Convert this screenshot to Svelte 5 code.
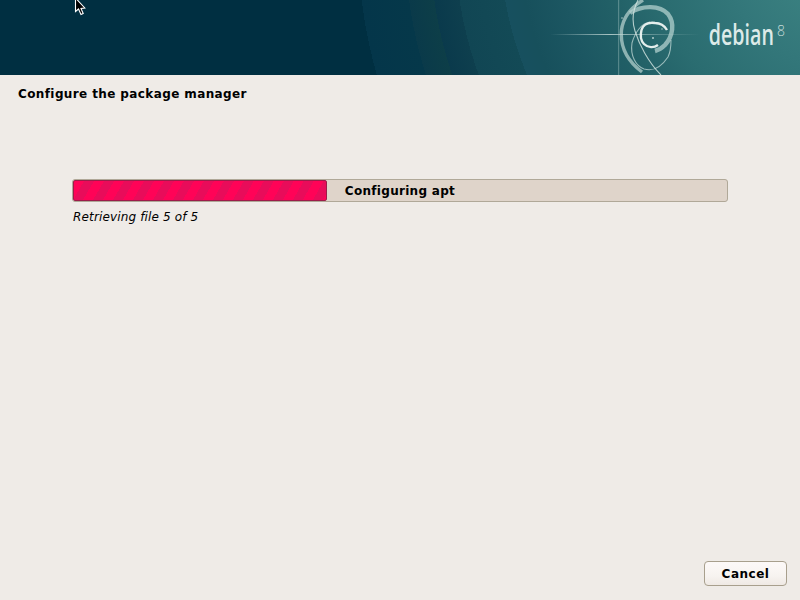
<script lang="ts">
  let progress = 38.9;
  let stage = "Configuring apt";
  let detail = "Retrieving file 5 of 5";
</script>

<div class="installer">
  <header class="banner">
    <svg class="swirl" viewBox="0 0 260 75" width="260" height="75" aria-hidden="true">
      <defs>
        <linearGradient id="hline" x1="0" x2="1" y1="0" y2="0">
          <stop offset="0" stop-color="#cfe3e0" stop-opacity="0" />
          <stop offset="0.4" stop-color="#d5e6e3" stop-opacity="0.75" />
          <stop offset="0.75" stop-color="#cfe3e0" stop-opacity="0.25" />
          <stop offset="1" stop-color="#cfe3e0" stop-opacity="0" />
        </linearGradient>
      </defs>
      <rect x="10" y="34" width="150" height="1" fill="url(#hline)" />
      <rect x="78" y="0" width="1.2" height="75" fill="#b9d4d2" opacity="0.35" />
      <!-- outer swirl, thick part -->
      <path d="M103 0 C 92 7 83 17 81.5 30 C 80 46 86 60 102 72" fill="none" stroke="#bcd6d3" stroke-width="3.4" opacity="0.7" />
      <path d="M90 13 C 102 5 120 5 128 14 C 135 23 133 36 125 45 C 122 48 119 50 115 51" fill="none" stroke="#b2d0cd" stroke-width="4.4" opacity="0.75" />
      <!-- thin strokes -->
      <path d="M98 0 C 92 12 92 22 95 31 C 99 44 108 62 121 75" fill="none" stroke="#d8e8e5" stroke-width="1.1" opacity="0.8" />
      <path d="M110 22 C 102 23 95 32 92 43 C 90 56 96 66 104 69 C 114 72 122 66 128 57 C 131 51 131 45 131 40" fill="none" stroke="#cbe0dd" stroke-width="1.1" opacity="0.7" />
      <!-- inner curl -->
      <path d="M127 30 C 124 25 119 23 115 23 C 108 22 103 25 101.5 30 C 100 36 101 41 104 44 C 108 48 114 48 118 45" fill="none" stroke="#eef5f3" stroke-width="2.4" opacity="0.95" />
      <circle cx="113" cy="38" r="1" fill="#d5e6e3" opacity="0.8" />
      <circle cx="122" cy="29" r="0.8" fill="#d5e6e3" opacity="0.7" />
      <circle cx="82" cy="18" r="0.8" fill="#d5e6e3" opacity="0.8" />
    </svg>
    <div class="brand"><span class="word">debian</span><span class="ver">8</span></div>
  </header>

  <main class="content">
    <h1>Configure the package manager</h1>

    <section class="progress-box">
      <div class="trough">
        <div class="fill" style="width: {progress}%"></div>
        <span class="stage">{stage}</span>
      </div>
      <p class="detail">{detail}</p>
    </section>
  </main>

  <footer class="actions">
    <button class="btn">Cancel</button>
  </footer>

  <svg class="cursor" width="13" height="17" viewBox="0 0 13 17" aria-hidden="true">
    <path d="M1.5 -2 L1.5 11.5 L4.5 9 L7 14.5 L9.2 13.5 L7 8.5 L10.8 8 Z" fill="#000" stroke="#fff" stroke-width="1.1" />
  </svg>
</div>

<style>
  :global(body) {
    margin: 0;
    background: #efebe7;
  }

  .installer {
    position: relative;
    display: flex;
    flex-direction: column;
    width: 800px;
    height: 600px;
    overflow: hidden;
    background: #efebe7;
    color: #000;
    font-family: "DejaVu Sans", sans-serif;
  }

  .banner {
    position: relative;
    flex: 0 0 75px;
    display: flex;
    justify-content: flex-end;
    background: radial-gradient(circle 600px at 850px -60px,
      #3f8884 0, #3a8080 70px, #33777a 130px, #2a6c70 200px,
      #215f66 250px, #1c5762 290px, #17505c 330px,
      #17505f 350px, #134a56 350px, #114654 395px,
      #0e3f4e 395px, #0a3a4c 420px,
      #0d3e48 420px, #0a3a4a 445px,
      #05384a 445px, #04364a 492px,
      #002f41 492px, #002f41 600px);
  }

  .swirl {
    position: absolute;
    left: 540px;
    top: 0;
  }

  .brand {
    position: relative;
    display: flex;
    align-items: flex-start;
    padding: 16px 15px 0 0;
    color: #dceae8;
  }

  .word {
    display: block;
    font-family: "Open Sans", sans-serif;
    font-size: 28px;
    font-weight: 600;
    line-height: 36px;
    transform: scaleX(0.7);
    transform-origin: right center;
  }

  .ver {
    margin-left: 3px;
    font-family: "Open Sans", sans-serif;
    font-weight: 300;
    font-size: 14px;
    line-height: 30px;
    color: #c4dbd9;
  }

  .content {
    flex: 1;
    display: flex;
    flex-direction: column;
  }

  h1 {
    margin: 0;
    padding: 11px 18px 0;
    font-size: 12px;
    line-height: 16px;
    font-weight: 700;
    letter-spacing: 0.39px;
  }

  .progress-box {
    margin: 77px 72px 0 72px;
  }

  .trough {
    position: relative;
    display: flex;
    align-items: center;
    justify-content: center;
    height: 21px;
    border: 1px solid #b0a898;
    border-radius: 3px;
    background: #dfd4ca;
  }

  .fill {
    position: absolute;
    left: 0;
    top: 0;
    bottom: 0;
    box-sizing: border-box;
    border: 1px solid #9c1c49;
    border-radius: 2px;
    background: repeating-linear-gradient(
      120deg,
      #ff0357 0 8.7px,
      #e80c5a 8.7px 17.3px
    );
  }

  .stage {
    position: relative;
    font-size: 12px;
    font-weight: 700;
    line-height: 16px;
    letter-spacing: 0.3px;
  }

  .detail {
    margin: 7px 0 0 1px;
    font-size: 12px;
    font-style: italic;
    line-height: 16px;
    letter-spacing: 0.15px;
  }

  .actions {
    display: flex;
    justify-content: flex-end;
    padding: 0 13px 14px 0;
  }

  .btn {
    box-sizing: border-box;
    width: 83px;
    height: 25px;
    padding: 0;
    border: 1px solid #a89f8d;
    border-radius: 4px;
    background: linear-gradient(#fdf9f8, #f7f3f0 60%, #efe9e4);
    color: #000;
    font-family: inherit;
    font-size: 12px;
    font-weight: 700;
    letter-spacing: 0.5px;
  }

  .cursor {
    position: absolute;
    left: 74px;
    top: 0;
  }
</style>
